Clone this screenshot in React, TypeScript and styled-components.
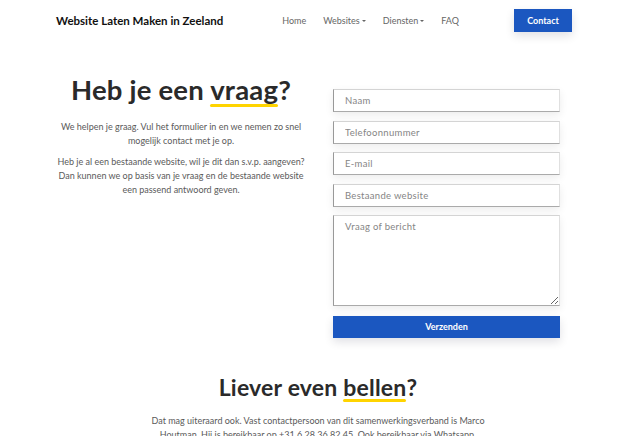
import styled, { createGlobalStyle } from 'styled-components'

const Global = createGlobalStyle`
    body{
        margin:0;
        background:#fff;
        font-family: Lato, "Open Sans", sans-serif;
        color:#333;
    }
    *{ box-sizing:border-box; }
`

const Header = styled.header`
    display:flex;
    align-items:center;
    justify-content:space-between;
    height:41px;
    padding:0 64px 0 56px;
`

const Brand = styled.div`
    font-size:11.5px;
    font-weight:700;
    color:#111;
`

const NavRight = styled.div`
    display:flex;
    align-items:center;
`

const NavList = styled.nav`
    display:flex;
    gap:17px;
    margin-right:55px;
    font-size:9px;
    color:#666;
`

const NavItem = styled.span`
    display:flex;
    align-items:center;
    gap:2px;
`

const Caret = styled.span`
    display:inline-block;
    border-left:2px solid transparent;
    border-right:2px solid transparent;
    border-top:2.5px solid #666;
`

const ContactBtn = styled.button`
    width:58px;
    height:23px;
    border:none;
    background:#1b57c0;
    color:#fff;
    font-family:inherit;
    font-weight:700;
    font-size:9px;
    box-shadow:0 4px 10px rgba(0,0,40,0.12);
`

const Row = styled.section`
    display:grid;
    grid-template-columns:250px 227px;
    column-gap:27px;
    padding:0 0 0 56px;
    margin-top:32px;
`

const Left = styled.div`
    text-align:center;
`

const Title = styled.h1<{ $size: number }>`
    margin:0 0 13px;
    font-size:${p => p.$size}px;
    font-weight:700;
    color:#2a2a2a;
    line-height:1.25;
    letter-spacing:0.2px;
`

const Mark = styled.span`
    position:relative;
    &::after{
        content:'';
        position:absolute;
        left:0;
        right:0;
        bottom:-1px;
        height:3px;
        border-radius:2px;
        background:#ffd400;
    }
`

const Text = styled.p`
    margin:0 0 7px;
    font-size:9px;
    line-height:14px;
    color:#5a5a5a;
`

const Form = styled.form`
    display:flex;
    flex-direction:column;
    gap:8.5px;
    margin-top:16px;
`

const fieldStyle = `
    width:100%;
    border:1px solid;
    border-color:#d4d4d4 #e0e0e0 #aaa #999;
    background:#fff;
    font-family:Lato, "Open Sans", sans-serif;
    font-size:9.5px;
    letter-spacing:0.3px;
    color:#555;
    padding:0 11px;
    box-shadow:0 3px 8px rgba(0,0,0,0.08);
    outline:none;
    &::placeholder{ color:#858585; }
`

const Input = styled.input`
    ${fieldStyle}
    height:23px;
`

const Area = styled.textarea`
    ${fieldStyle}
    height:91px;
    padding-top:5px;
    margin-bottom:1px;
    resize:vertical;
`

const Submit = styled.button`
    height:22px;
    border:none;
    background:#1b57c0;
    color:#fff;
    font-family:inherit;
    font-weight:700;
    font-size:9px;
    box-shadow:0 4px 10px rgba(0,0,40,0.12);
`

const Second = styled.section`
    text-align:center;
    margin-top:35px;
    padding:0 145px;
`

export default function App() {
    return <>
        <Global />
        <Header>
            <Brand>Website Laten Maken in Zeeland</Brand>
            <NavRight>
                <NavList>
                    <NavItem>Home</NavItem>
                    <NavItem>Websites <Caret /></NavItem>
                    <NavItem>Diensten <Caret /></NavItem>
                    <NavItem>FAQ</NavItem>
                </NavList>
                <ContactBtn>Contact</ContactBtn>
            </NavRight>
        </Header>

        <Row>
            <Left>
                <Title $size={27.5}>Heb je een <Mark>vraag</Mark>?</Title>
                <Text>We helpen je graag. Vul het formulier in en we nemen zo snel mogelijk contact met je op.</Text>
                <Text>Heb je al een bestaande website, wil je dit dan s.v.p. aangeven? Dan kunnen we op basis van je vraag en de bestaande website een passend antwoord geven.</Text>
            </Left>
            <Form onSubmit={e => e.preventDefault()}>
                <Input placeholder="Naam" />
                <Input placeholder="Telefoonnummer" />
                <Input placeholder="E-mail" />
                <Input placeholder="Bestaande website" />
                <Area placeholder="Vraag of bericht" />
                <Submit>Verzenden</Submit>
            </Form>
        </Row>

        <Second>
            <Title $size={23}>Liever even <Mark>bellen</Mark>?</Title>
            <Text>Dat mag uiteraard ook. Vast contactpersoon van dit samenwerkingsverband is Marco Houtman. Hij is bereikbaar op +31 6 28 36 82 45. Ook bereikbaar via Whatsapp.</Text>
        </Second>
    </>
}
